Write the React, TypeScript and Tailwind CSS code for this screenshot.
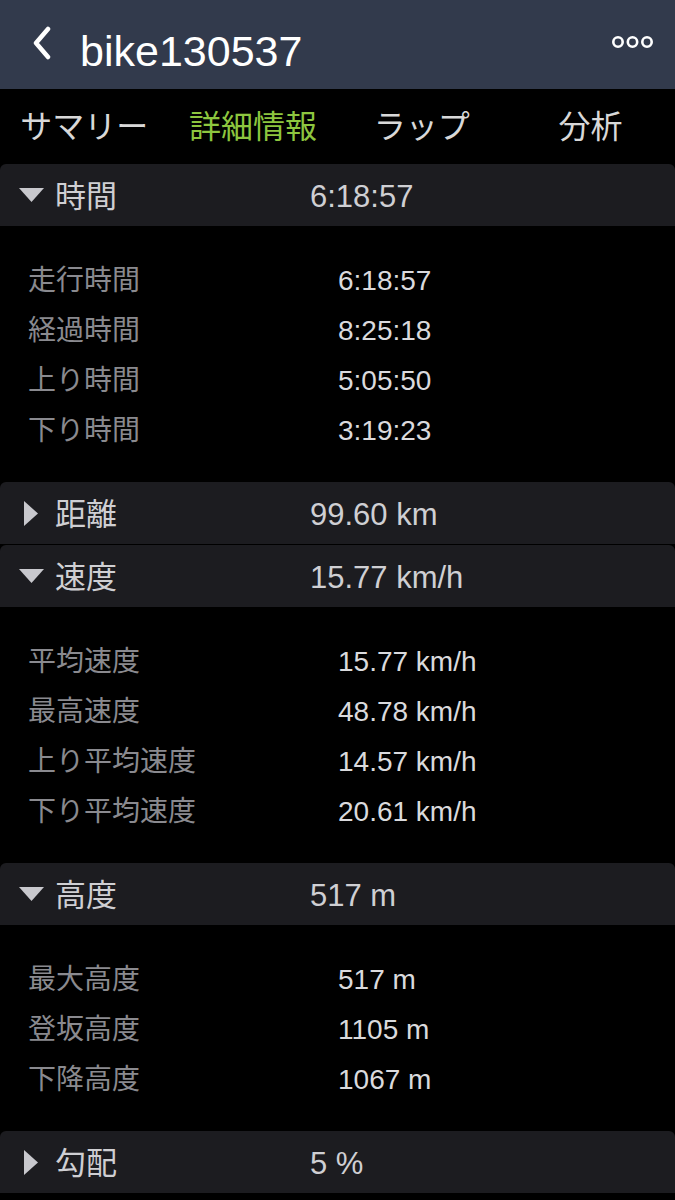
const FONT = { fontFamily: '"Liberation Sans", "Noto Sans CJK JP", sans-serif' };

type Row = { label: string; value: string };
type Section = { title: string; value: string; open: boolean; rows?: Row[] };

const sections: Section[] = [
  {
    title: '時間',
    value: '6:18:57',
    open: true,
    rows: [
      { label: '走行時間', value: '6:18:57' },
      { label: '経過時間', value: '8:25:18' },
      { label: '上り時間', value: '5:05:50' },
      { label: '下り時間', value: '3:19:23' },
    ],
  },
  { title: '距離', value: '99.60 km', open: false },
  {
    title: '速度',
    value: '15.77 km/h',
    open: true,
    rows: [
      { label: '平均速度', value: '15.77 km/h' },
      { label: '最高速度', value: '48.78 km/h' },
      { label: '上り平均速度', value: '14.57 km/h' },
      { label: '下り平均速度', value: '20.61 km/h' },
    ],
  },
  {
    title: '高度',
    value: '517 m',
    open: true,
    rows: [
      { label: '最大高度', value: '517 m' },
      { label: '登坂高度', value: '1105 m' },
      { label: '下降高度', value: '1067 m' },
    ],
  },
  { title: '勾配', value: '5 %', open: false },
];

const tabs = ['サマリー', '詳細情報', 'ラップ', '分析'];

function Caret({ open }: { open: boolean }) {
  if (open) {
    return (
      <svg width="25" height="14" viewBox="0 0 25 14" className="ml-[19px] mr-[11px] shrink-0">
        <polygon points="0,0 25,0 12.5,14" fill="#c8c8cd" />
      </svg>
    );
  }
  return (
    <svg width="14" height="25" viewBox="0 0 14 25" className="ml-[24px] mr-[17px] shrink-0">
      <polygon points="0,0 14,12.5 0,25" fill="#c8c8cd" />
    </svg>
  );
}

function SectionHeader({ s, gap }: { s: Section; gap: boolean }) {
  return (
    <div
      className={`flex h-[62px] items-center rounded-t-[6px] bg-[#1c1c20] ${gap ? 'mt-px' : ''}`}
    >
      <Caret open={s.open} />
      <span className="w-[255px] shrink-0 pt-[2px] text-[31px] leading-none text-[#cfcfd3]">
        {s.title}
      </span>
      <span className="pt-[2px] text-[31px] leading-none text-[#cfcfd3]">{s.value}</span>
    </div>
  );
}

export default function App() {
  return (
    <div className="min-h-screen w-[675px] bg-black" style={FONT}>
      {/* Nav bar */}
      <div className="flex h-[89px] items-center bg-[#323a4c]">
        <svg width="22" height="34" viewBox="0 0 22 34" className="ml-[31px] -mt-[4px] shrink-0">
          <polyline
            points="17,3 5,17 17,31"
            fill="none"
            stroke="#ffffff"
            strokeWidth="4.5"
            strokeLinecap="round"
            strokeLinejoin="round"
          />
        </svg>
        <span className="ml-[27px] pt-[14px] text-[43px] leading-none text-white">bike130537</span>
        <svg width="42" height="12" viewBox="0 0 42 12" className="ml-auto mr-[21px] -mt-[6px]">
          <circle cx="6" cy="6" r="4.7" fill="none" stroke="#fff" strokeWidth="2.6" />
          <circle cx="20.5" cy="6" r="4.7" fill="none" stroke="#fff" strokeWidth="2.6" />
          <circle cx="35" cy="6" r="4.7" fill="none" stroke="#fff" strokeWidth="2.6" />
        </svg>
      </div>

      {/* Tabs */}
      <div className="grid h-[75px] grid-cols-4 items-center">
        {tabs.map((t, i) => (
          <span
            key={t}
            className={`text-center text-[32px] leading-none ${
              i === 1 ? 'text-[#8dc63f]' : 'text-[#d8d8d8]'
            }`}
          >
            {t}
          </span>
        ))}
      </div>

      {sections.map((s, i) => (
        <div key={s.title}>
          <SectionHeader s={s} gap={i > 0 && !sections[i - 1].open} />
          {s.open && s.rows && (
            <div className="py-[28px]">
              {s.rows.map((r) => (
                <div key={r.label} className="flex h-[50px] items-center pt-[4px]">
                  <span className="ml-[28px] w-[310px] shrink-0 text-[28px] leading-none text-[#8a8a8f]">
                    {r.label}
                  </span>
                  <span className="text-[28px] leading-none text-[#dadadd]">{r.value}</span>
                </div>
              ))}
            </div>
          )}
        </div>
      ))}
    </div>
  );
}
